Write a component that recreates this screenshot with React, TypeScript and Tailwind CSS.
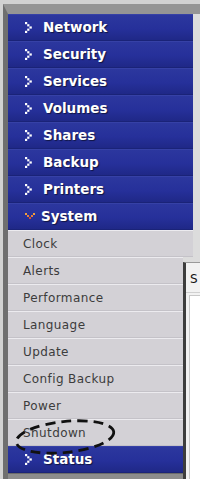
import React from "react";

function Chevron() {
  return (
    <svg width="8" height="11" viewBox="0 0 8 11" className="shrink-0">
      <rect x="0" y="0" width="2.2" height="2.2" fill="#fff" />
      <rect x="2.2" y="2.2" width="2.2" height="2.2" fill="#fff" />
      <rect x="4.4" y="4.4" width="2.4" height="2.2" fill="#fff" />
      <rect x="2.2" y="6.6" width="2.2" height="2.2" fill="#fff" />
      <rect x="0" y="8.8" width="2.2" height="2.2" fill="#fff" />
    </svg>
  );
}

function DownChevron() {
  return (
    <svg width="10" height="7" viewBox="0 0 10 7" className="shrink-0">
      <rect x="0" y="0" width="2" height="2" fill="#f0a040" />
      <rect x="2" y="2" width="2" height="2" fill="#e8803a" />
      <rect x="4" y="4" width="2" height="2" fill="#d8502a" />
      <rect x="6" y="2" width="2" height="2" fill="#e8803a" />
      <rect x="8" y="0" width="2" height="2" fill="#f0a040" />
    </svg>
  );
}

function BlueRow({ label, open = false, w = "w-[185px]" }: { label: string; open?: boolean; w?: string }) {
  return (
    <div
      className={`${w} h-[27px] flex items-center pl-[17px] border-t border-t-[#3641a6] border-b border-b-[#1a2378] bg-[linear-gradient(#2c379e,#26309a_55%,#1f2887)]`}
    >
      <div className="w-[8px] flex justify-start">{open ? <DownChevron /> : <Chevron />}</div>
      <span
        className={`${open ? "ml-[8px]" : "ml-[10px]"} text-white font-bold text-[13.5px] leading-none [font-family:'DejaVu_Sans',sans-serif] [text-shadow:1px_1px_1px_rgba(0,0,0,0.55)]`}
      >
        {label}
      </span>
    </div>
  );
}

function GrayRow({ label, w = "w-[175px]" }: { label: string; w?: string }) {
  return (
    <div
      className={`${w} h-[27px] flex items-center pl-[15px] bg-[#d3d1d6] border-t border-t-[#ecebef] border-b border-b-[#c4c2c8]`}
    >
      <span className="text-[12px] leading-none tracking-[0.4px] text-[#3c3c3c] [font-family:'DejaVu_Sans',sans-serif]">
        {label}
      </span>
    </div>
  );
}

export default function App() {
  const top = ["Network", "Security", "Services", "Volumes", "Shares", "Backup", "Printers"];
  const subs = ["Alerts", "Performance", "Language", "Update", "Config Backup", "Power", "Shutdown"];
  return (
    <div className="relative w-[200px] h-[479px] overflow-hidden bg-[#d2d2d2] pt-[4px] pl-[3px]">
      <div className="h-[475px] flex flex-col bg-[#dcdcdc] border-l-[5px] border-l-[#6f6f6f] border-t-[10px] border-t-[#959595]">
        {top.map((t) => (
          <BlueRow key={t} label={t} />
        ))}
        <BlueRow label="System" open />
        <GrayRow label="Clock" w="w-[185px]" />
        <div className="flex flex-1">
          <div className="w-[175px] flex flex-col">
            {subs.map((s) => (
              <GrayRow key={s} label={s} />
            ))}
            <BlueRow label="Status" w="w-[175px]" />
            <div className="flex-1 bg-[#8c8c8c] border-t border-t-[#6a6a6a]" />
          </div>
          <div className="flex-1 flex flex-col pt-[5px]">
            <div className="flex-1 flex flex-col bg-[#f2f2f2] border-l-[3px] border-l-[#3d3d3d] border-t border-t-[#9a9a9a]">
              <div className="h-[30px] flex items-center pl-[4px] pt-[3px] border-b border-b-[#d0d0d0]">
                <span className="text-[12px] leading-none text-[#111] [font-family:'DejaVu_Sans',sans-serif]">S</span>
              </div>
              <div className="flex-1 ml-[3px] mt-[2px] bg-white border-l border-t border-[#c8c8c8]" />
            </div>
          </div>
        </div>
      </div>
      <svg
        className="absolute left-[12px] top-[417px] pointer-events-none"
        width="106"
        height="40"
        viewBox="0 0 106 40"
      >
        <ellipse
          cx="53"
          cy="20"
          rx="49"
          ry="15.5"
          fill="none"
          stroke="#111"
          strokeWidth="2.8"
          strokeDasharray="10 6"
          transform="rotate(-6 53 20)"
        />
      </svg>
    </div>
  );
}
